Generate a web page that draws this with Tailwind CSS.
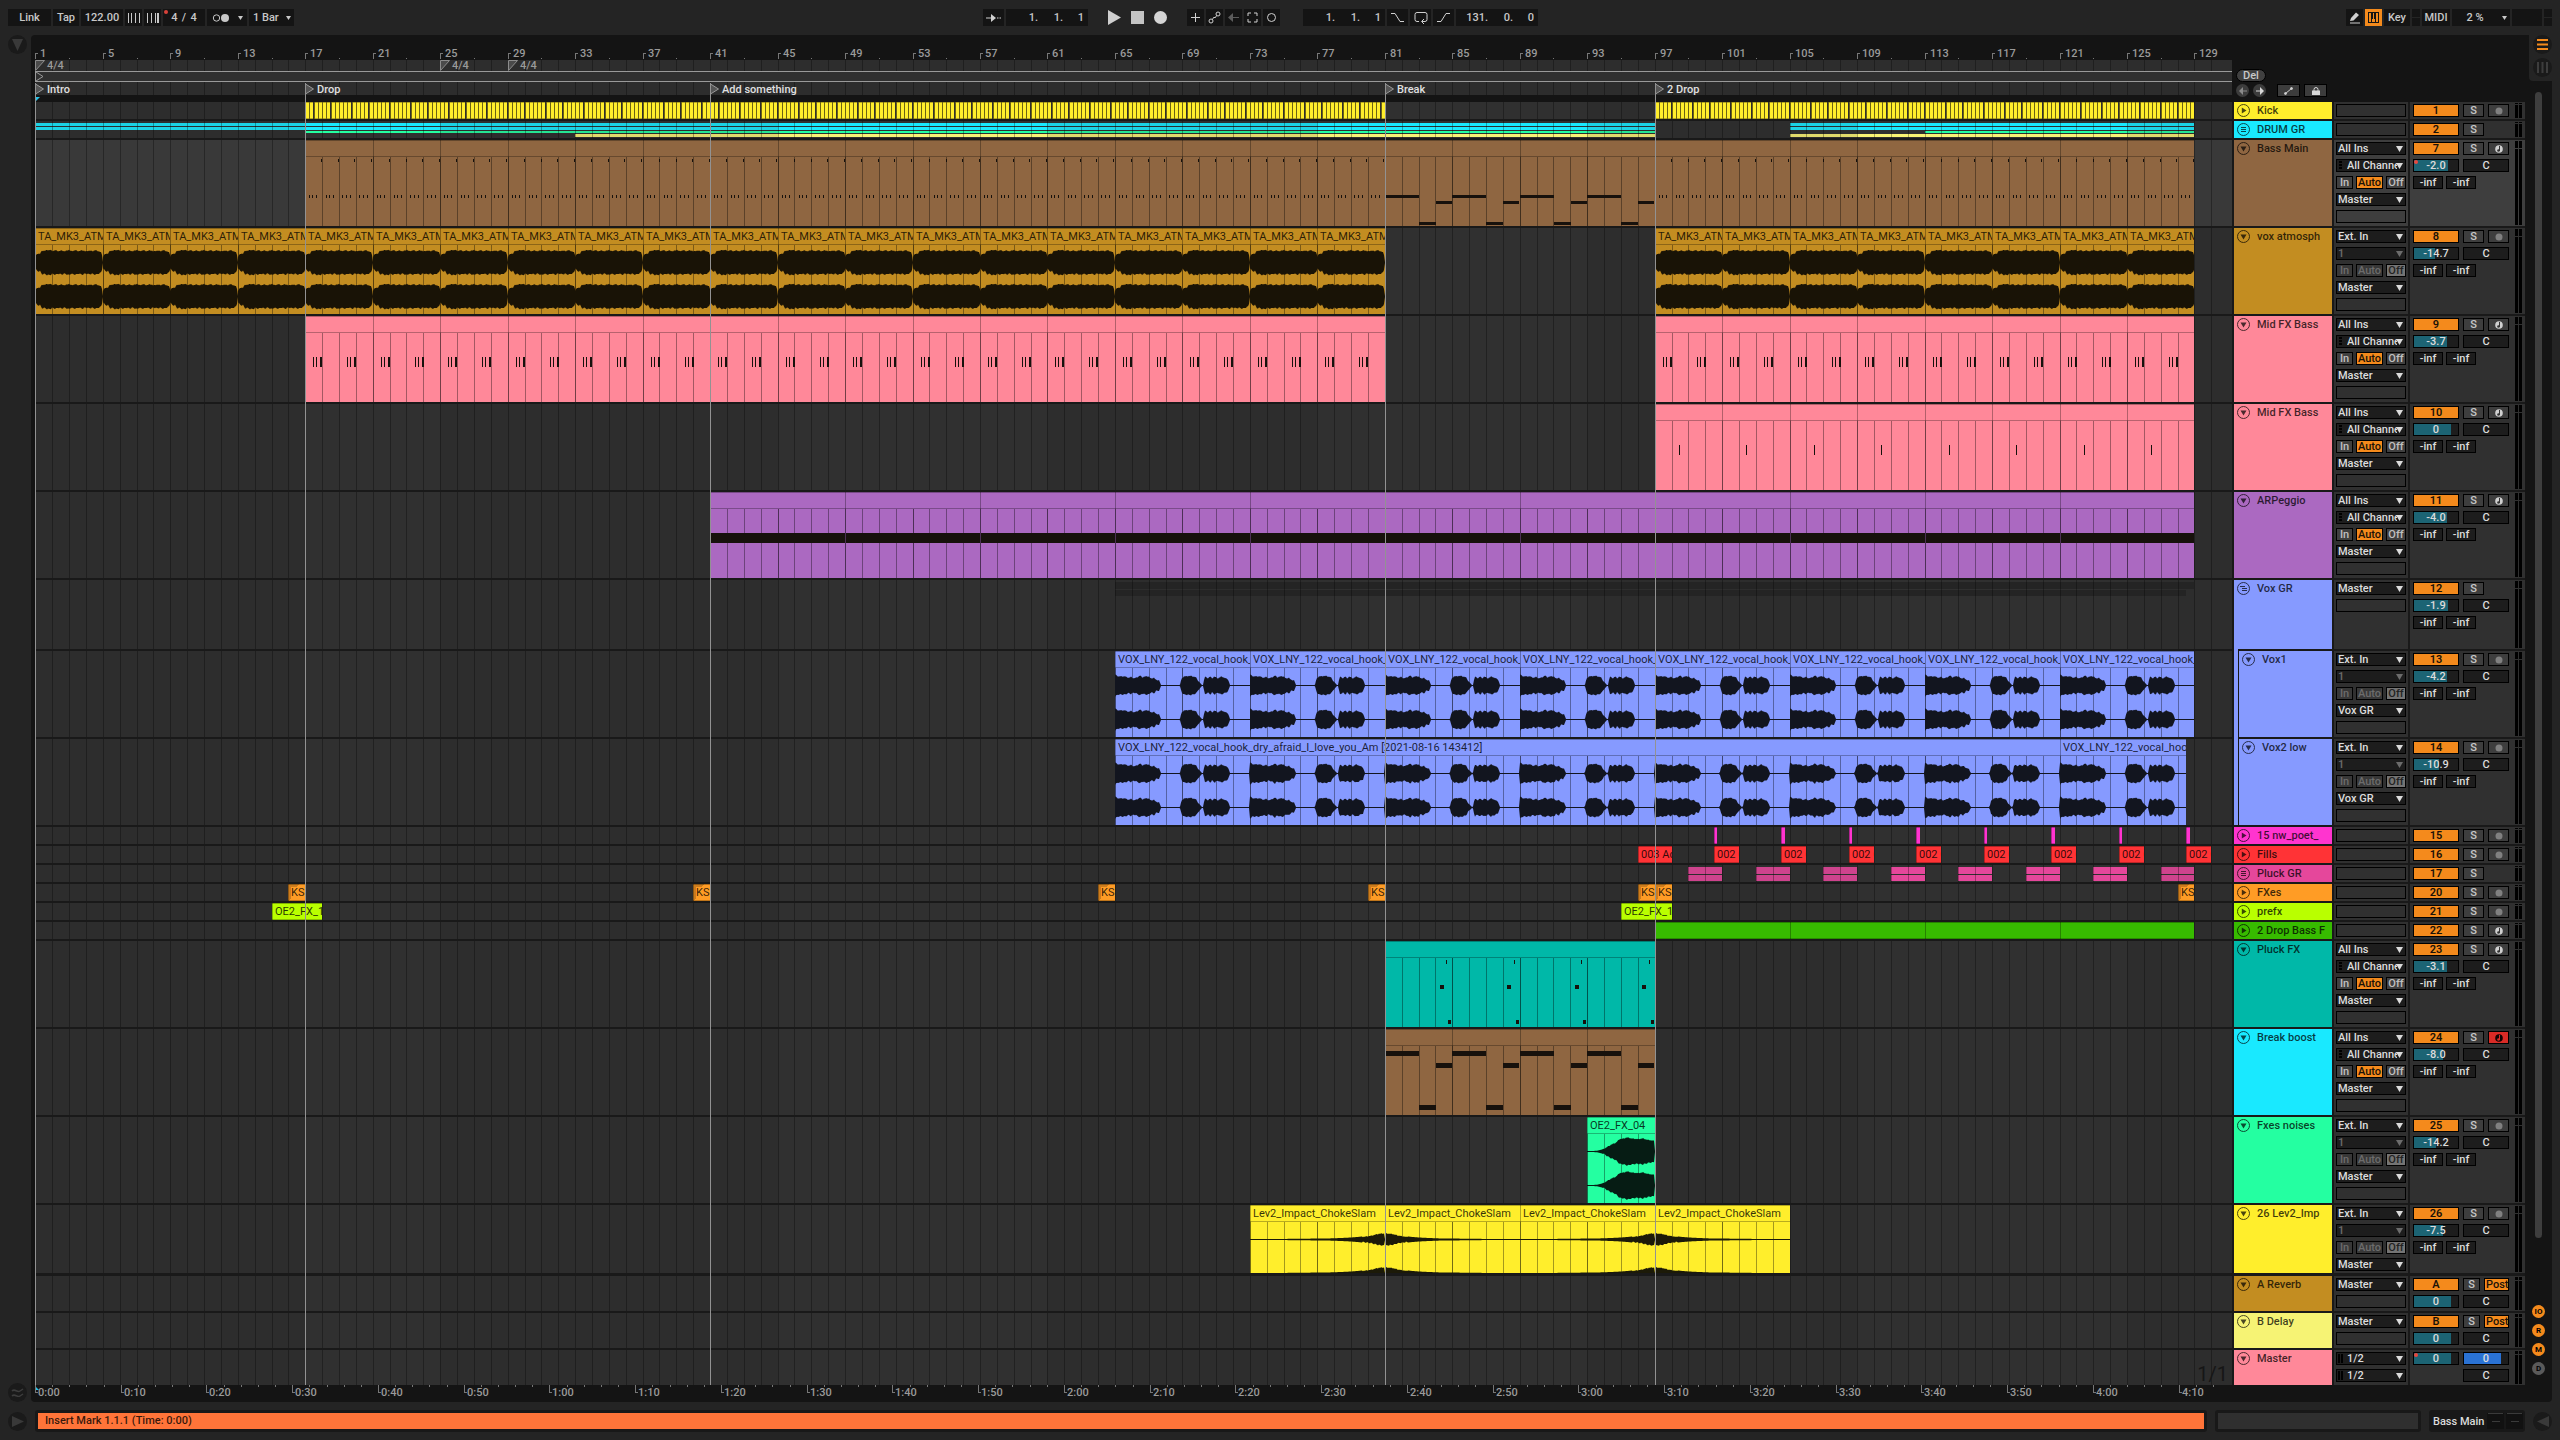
<!DOCTYPE html>
<html lang="en">
<head>
    <meta charset="UTF-8">
    <title>Arrangement</title>
    <script src="https://cdn.jsdelivr.net/npm/@tailwindcss/browser@4"></script>
</head>
<body class="bg-[#242424] font-['Roboto','Inter',sans-serif] text-[11px] leading-[13px] font-medium text-[#c8c8c8]">
<div class="flex min-h-screen flex-col">

    <!-- Control bar -->
    <header class="flex h-[35px] items-start px-2 pt-[9px]">
        <div class="flex w-[975px] gap-0.5">
            <button class="h-[17px] w-[43px] bg-[#141414]">Link</button>
            <button class="h-[17px] w-[26px] bg-[#141414]">Tap</button>
            <input aria-label="Tempo" value="122.00" class="h-[17px] w-[42px] bg-[#141414] text-center">
            <button aria-label="Nudge down" class="flex h-[17px] w-[17px] items-center justify-center bg-[#141414]">
                <svg width="12" height="10" shape-rendering="crispEdges" fill="#c8c8c8"><path d="M0 0h1v10h-1zM3 0h1v10h-1zM7 0h1v10h-1zM11 0h1v10h-1z"/></svg>
            </button>
            <button aria-label="Nudge up" class="flex h-[17px] w-[17px] items-center justify-center bg-[#141414]">
                <svg width="12" height="10" shape-rendering="crispEdges" fill="#c8c8c8"><path d="M0 0h1v10h-1zM4 0h1v10h-1zM8 0h1v10h-1zM10 0h2v10h-2z"/></svg>
            </button>
            <div class="relative flex h-[17px] w-[42px] items-center justify-center gap-[3px] bg-[#141414]">
                <span class="absolute top-px left-px size-1 rounded-full bg-[#d8423a]"></span>
                <input aria-label="Signature numerator" value="4" class="w-[9px] bg-transparent text-center">
                <span>/</span>
                <input aria-label="Signature denominator" value="4" class="w-[9px] bg-transparent text-center">
            </div>
            <button aria-label="Metronome" class="flex h-[17px] w-10 items-center gap-2 bg-[#141414] pl-[5px]">
                <svg width="18" height="10"><circle cx="4.500" cy="5" r="3.200" fill="none" stroke="#c8c8c8"/><circle cx="13" cy="5" r="4" fill="#c8c8c8"/></svg>
                <svg width="5" height="4" fill="#c8c8c8"><path d="M0 0h5l-2.500 4z"/></svg>
            </button>
            <div class="relative h-[17px] w-[45px] bg-[#141414]">
                <select aria-label="Quantization" class="h-[17px] w-full appearance-none bg-transparent pl-1"><option>1 Bar</option></select>
                <svg class="pointer-events-none absolute top-[7px] right-[3px]" width="5" height="4" fill="#c8c8c8"><path d="M0 0h5l-2.500 4z"/></svg>
            </div>
        </div>

        <div class="flex gap-0.5">
            <button aria-label="Follow" class="flex h-[17px] w-[21px] items-center justify-center bg-[#141414]">
                <svg width="15" height="10" fill="#d0d0d0"><path d="M0 4.500h5V1l5 4-5 4V5.500H0zM11 4.500h1.500v1H11zM13.500 4.500H15v1h-1.500z"/></svg>
            </button>
            <div class="flex h-[17px] w-[82px] items-center justify-end bg-[#141414] pr-1">
                <input aria-label="Position bar" value="1." class="w-[25px] bg-transparent text-right"><input aria-label="Position beat" value="1." class="w-[25px] bg-transparent text-right"><input aria-label="Position sixteenth" value="1" class="w-[21px] bg-transparent text-right">
            </div>
            <div class="mx-[18px] flex items-center gap-[10px]">
                <button aria-label="Play"><svg width="13" height="15" fill="#cfcfcf"><path d="M0 0l13 7.500L0 15z"/></svg></button>
                <button aria-label="Stop" class="size-[13px] bg-[#c4c4c4]"></button>
                <button aria-label="Record" class="size-[13px] rounded-full bg-[#d5d5d5]"></button>
            </div>
            <button aria-label="Overdub" class="flex h-[17px] w-[17px] items-center justify-center bg-[#141414]">
                <svg width="11" height="11" shape-rendering="crispEdges" fill="#d0d0d0"><path d="M5 1h1v9h-1zM1 5h9v1h-9z"/></svg>
            </button>
            <button aria-label="Automation arm" class="flex h-[17px] w-[17px] items-center justify-center bg-[#141414]">
                <svg width="13" height="13" fill="none" stroke="#d0d0d0"><circle cx="3" cy="10" r="2"/><circle cx="10" cy="3" r="2"/><path d="M4.500 8.500l1-2 2 0 1-2"/></svg>
            </button>
            <button aria-label="Re-enable automation" class="flex h-[17px] w-[17px] items-center justify-center bg-[#141414]">
                <svg width="11" height="9" fill="#5c5c5c"><path d="M0 4.500L5 0v4h6v1H5v4z"/></svg>
            </button>
            <button aria-label="Capture" class="flex h-[17px] w-[17px] items-center justify-center bg-[#141414]">
                <svg width="11" height="11" fill="none" stroke="#d0d0d0"><path d="M1 4V1h3M7 1h3v3M10 7v3H7M4 10H1V7"/></svg>
            </button>
            <button aria-label="Session record" class="mr-[21px] flex h-[17px] w-[17px] items-center justify-center bg-[#141414]">
                <svg width="11" height="11" fill="none" stroke="#d0d0d0"><circle cx="5.500" cy="5.500" r="4"/></svg>
            </button>
            <div class="flex h-[17px] w-[82px] items-center justify-end bg-[#141414] pr-1">
                <input aria-label="Loop start bar" value="1." class="w-[25px] bg-transparent text-right"><input aria-label="Loop start beat" value="1." class="w-[25px] bg-transparent text-right"><input aria-label="Loop start sixteenth" value="1" class="w-[21px] bg-transparent text-right">
            </div>
            <button aria-label="Punch in" class="flex h-[17px] w-[21px] items-center justify-center bg-[#141414]">
                <svg width="15" height="11" fill="none" stroke="#d0d0d0"><path d="M1 1.500h4l5 8h4"/></svg>
            </button>
            <button aria-label="Loop" class="flex h-[17px] w-[21px] items-center justify-center bg-[#141414]">
                <svg width="14" height="13" fill="none" stroke="#d0d0d0"><path d="M5 10.500H3a2 2 0 0 1-2-2v-5a2 2 0 0 1 2-2h8a2 2 0 0 1 2 2v5a2 2 0 0 1-2 2H8M10 8L7.500 10.500 10 13"/></svg>
            </button>
            <button aria-label="Punch out" class="flex h-[17px] w-[21px] items-center justify-center bg-[#141414]">
                <svg width="15" height="11" fill="none" stroke="#d0d0d0"><path d="M1 9.500h4l5-8h4"/></svg>
            </button>
            <div class="flex h-[17px] w-[82px] items-center justify-end bg-[#141414] pr-1">
                <input aria-label="Loop length bars" value="131." class="w-[30px] bg-transparent text-right"><input aria-label="Loop length beats" value="0." class="w-[25px] bg-transparent text-right"><input aria-label="Loop length sixteenths" value="0" class="w-[21px] bg-transparent text-right">
            </div>
        </div>

        <div class="ml-auto flex gap-0.5">
            <button aria-label="Draw mode" class="flex h-[17px] w-[17px] items-center justify-center bg-[#141414]">
                <svg width="12" height="12" fill="#d0d0d0"><path d="M1 9l1-3 5-5.500 3 2.500-5.500 5.500zM1 10.500h10v1H1z"/></svg>
            </button>
            <button aria-label="Computer MIDI keyboard" class="flex h-[17px] w-[17px] items-center justify-center bg-[#f48a1c]">
                <svg width="11" height="11" fill="none" stroke="#141414" shape-rendering="crispEdges"><path d="M.5.500h10v10H.500zM3.500 1v9M7.500 1v9"/><path stroke-width="2" d="M4 1v6M7 1v6"/></svg>
            </button>
            <button class="h-[17px] w-[26px] bg-[#141414]">Key</button>
            <div class="flex w-2 flex-col gap-px"><span class="h-2 bg-[#141414]"></span><span class="h-2 bg-[#141414]"></span></div>
            <button class="h-[17px] w-7 bg-[#141414]">MIDI</button>
            <button class="relative h-[17px] w-[58px] bg-[#141414] pr-3">2 %
                <svg class="absolute top-[7px] right-[3px]" width="5" height="4" fill="#c8c8c8"><path d="M0 0h5l-2.500 4z"/></svg>
            </button>
            <div class="h-[17px] w-[30px] bg-[#141414]"></div>
            <div class="flex w-2 flex-col gap-px"><span class="h-2 bg-[#141414]"></span><span class="h-2 bg-[#141414]"></span></div>
        </div>
    </header>

    <main class="flex pr-2">
        <div class="flex w-[31px] flex-col items-start justify-between pl-2">
            <button aria-label="Show browser" class="flex size-[19px] items-center justify-center rounded-full bg-[#1a1a1a]">
                <svg width="11" height="12" fill="#393939"><path d="M0 0h11L5.500 12z"/></svg>
            </button>
            <button aria-label="Groove pool" class="flex size-[19px] items-center justify-center rounded-full bg-[#1a1a1a]">
                <svg width="13" height="9" fill="none" stroke="#3d3d3d" stroke-width="1.500"><path d="M1 3c3-3 5 2 8 0l3-2M1 8c3-3 5 2 8 0l3-2"/></svg>
            </button>
        </div>

        <section class="min-w-0 flex-1 rounded-l-[4px] bg-[#141414] px-1">
            <!-- Rulers -->
            <div class="flex h-[67px] gap-0.5">
                <div id="rulers" class="relative min-w-0 flex-1 overflow-hidden">
                    <div id="beatRuler" class="relative h-[25px] text-[#9a9a9a]"></div>
                    <div id="signatureLane" class="relative h-[11px] bg-[#2d2d2d] text-[#9a9a9a]"></div>
                    <div class="h-[11px] border border-r-0 border-[#9a9a9a] bg-[#303030]">
                        <svg width="9" height="9" fill="none" stroke="#9a9a9a"><path d="M0 0l7 4.500L0 9"/></svg>
                    </div>
                    <div id="locatorLane" class="relative h-[13px] bg-[#2d2d2d] text-[#e0e0e0]"></div>
                    <svg width="6" height="7" class="block" fill="#27c3e8"><path d="M1 2h4L1 6z"/></svg>
                </div>
                <div class="flex w-[291px] flex-col gap-0.5 pt-[34px] pl-0.5">
                    <button class="h-[13px] w-[30px] rounded-full border border-black bg-[#404040] leading-[11px]">Del</button>
                    <div class="flex">
                        <button aria-label="Previous locator" class="flex size-[13px] items-center justify-center rounded-full bg-[#3c3c3c]">
                            <svg width="8" height="8" fill="#8a8a8a"><path d="M0 4l4-4v3.500h4v1H4V8z"/></svg>
                        </button>
                        <button aria-label="Next locator" class="ml-1 flex size-[13px] items-center justify-center rounded-full bg-[#3c3c3c]">
                            <svg width="8" height="8" fill="#d8d8d8"><path d="M8 4L4 0v3.500H0v1h4V8z"/></svg>
                        </button>
                        <button aria-label="Automation mode" class="ml-[11px] flex h-[13px] w-[23px] items-center justify-center border border-black bg-[#3c3c3c]">
                            <svg width="9" height="8" fill="#cfcfcf" stroke="#cfcfcf"><path d="M1.500 6.500l6-5"/><circle cx="1.500" cy="6.500" r="1"/><circle cx="7.500" cy="1.500" r="1"/></svg>
                        </button>
                        <button aria-label="Lock envelopes" class="ml-1 flex h-[13px] w-[23px] items-center justify-center border border-black bg-[#3c3c3c]">
                            <svg width="8" height="8" fill="#d8d8d8"><path d="M0 3.500h8V8H0z"/><path fill="none" stroke="#d8d8d8" d="M2 4V2.500a2 2 0 0 1 4 0V4"/></svg>
                        </button>
                    </div>
                </div>
            </div>

            <!-- Track rows -->
            <div class="relative">
                <div id="tracks" class="flex flex-col gap-0.5 bg-[#191919]"></div>
                <div id="locatorLines" class="pointer-events-none absolute inset-y-0 left-0"></div>
            </div>

            <div class="flex h-[17px] gap-0.5">
                <div id="timeRuler" class="relative min-w-0 flex-1 overflow-hidden text-[#9a9a9a]"></div>
                <div class="w-[291px]"></div>
            </div>
        </section>

        <aside class="flex w-[23px] flex-col rounded-br-[4px] bg-[#141414]">
            <div class="flex h-[46px] flex-col items-end gap-1 rounded-bl-[4px] bg-[#242424]">
                <button aria-label="Arrangement view" class="flex size-[19px] items-center justify-center rounded-full bg-[#1a1a1a]">
                    <svg width="11" height="11" fill="#f48a1c"><path d="M0 0h11v2H0zM0 4.500h11v2H0zM0 9h11v2H0z"/></svg>
                </button>
                <button aria-label="Session view" class="flex size-[19px] items-center justify-center rounded-full bg-[#1a1a1a]">
                    <svg width="11" height="11" fill="#3d3d3d"><path d="M0 0h2v11H0zM4.500 0h2v11h-2zM9 0h2v11H9z"/></svg>
                </button>
            </div>
            <div class="mt-[11px] ml-1.5 h-[1146px] w-[7px] rounded-full bg-[#3e3e3e]"></div>
            <div class="mt-[67px] ml-[3px] flex flex-col gap-1.5 text-[8px] leading-[13px] font-bold text-black">
                <button class="size-[13px] rounded-full bg-[#f48a1c]">IO</button>
                <button class="size-[13px] rounded-full bg-[#f48a1c]">R</button>
                <button class="size-[13px] rounded-full bg-[#f48a1c]">M</button>
                <button class="size-[13px] rounded-full bg-[#5a5a5a]">D</button>
            </div>
        </aside>
    </main>

    <!-- Status bar -->
    <footer class="flex items-center gap-2 px-2 pt-2">
        <button aria-label="Show clip view" class="flex size-[19px] items-center justify-center rounded-full bg-[#1a1a1a]">
            <svg width="12" height="11" fill="#393939"><path d="M0 0l12 5.500L0 11z"/></svg>
        </button>
        <div class="flex-1 rounded-[3px] bg-[#181818] p-[3px]">
            <p class="h-4 bg-[#ff7439] px-[7px] leading-4 text-black/80">Insert Mark 1.1.1 (Time: 0:00)</p>
        </div>
        <div class="w-[206px] rounded-[3px] bg-[#181818] p-[3px]"><div class="h-4 bg-[#2f2f2f]"></div></div>
        <div class="flex h-[22px] w-24 items-center justify-between rounded-[3px] bg-[#181818] pl-1 whitespace-nowrap text-[#dcdcdc]">
            <span>Bass Main</span>
            <svg width="38" height="16" shape-rendering="crispEdges"><path fill="#111" d="M0 0h17v16H0zM19 0h17v16H19z"/><path fill="#3a3a3a" d="M1 0h15v1H1zM20 0h15v1H20zM5 8h8v1H5zM24 8h8v1h-8z"/></svg>
        </div>
        <button aria-label="Show device view" class="flex size-[19px] items-center justify-center rounded-full bg-[#1a1a1a]">
            <svg width="12" height="11" fill="#393939"><path d="M12 0L0 5.500 12 11z"/></svg>
        </button>
    </footer>
</div>

<script>
    const TOTAL_BARS = 130.25;
    const BRIGHT = [[17, 25], [45, 61], [77, 93], [109, 125]];
    const LOCATORS = [[1, 'Intro'], [17, 'Drop'], [41, 'Add something'], [81, 'Break'], [97, '2 Drop']];

    const every = (from, to, step, extra) => {
        const out = [];
        for (let b = from; b < to; b += step) out.push({ s: b, e: b + step, ...extra });
        return out;
    };
    const starts = (from, n, step, len, extra) =>
        Array.from({ length: n }, (_, i) => ({ s: from + i * step, e: from + i * step + len, ...extra }));

    // notes: [bar offset, top, width in px or bars ('b'), height]
    const BASS = [0, 1, 2, 3].flatMap(b => [[b + .93, 19, 1, 3], [b + .22, 55, 1, 3], [b + .42, 55, 1, 3], [b + .66, 55, 1, 3]]);
    const BREAK_BASS = [[0, 55, '2b', 3], [2, 82, '1b', 3], [3, 61, '1b', 3]];
    const BOOST = [[0, 22, '2b', 5], [2, 76, '1b', 5], [3, 34, '1b', 5]];
    const MID = [0, 2].flatMap(b => [[b + .5, 41, 1, 10], [b + .66, 41, 1, 10], [b + .9, 41, 2, 10]]);
    const PLUCK = [0, 4, 8, 12].flatMap(b => [[b + 3.64, 19, 1, 4], [b + 3.24, 44, 4, 4], [b + 3.76, 79, 3, 4]]);

    // envelopes: [bar offset, amplitude in px]
    const VOX_ENV = [[0, 11.5], [.18, 9.5], [.6, 9.5], [.8, 8], [.95, 9], [1.1, 7.5], [1.3, 8.5], [1.5, 10.5], [1.6, 8.5], [1.8, 9.5], [2, 9.5], [2.15, 7], [2.3, 8.5], [2.45, 5.5], [2.6, 6], [2.72, .5],
        [3.85, .5], [3.95, 7.5], [4.1, 9.5], [4.5, 10], [4.8, 8.5], [4.95, 4.5], [5.15, .5], [5.22, .5], [5.32, 9.5], [5.5, 7.5], [5.65, 9.5], [5.75, 7.5], [5.9, 9.5], [6.1, 7.5], [6.3, 9.5], [6.5, 8], [6.7, 6.5], [6.82, .5], [8, .5]];
    const ATM_ENV = [[0, 6], [.15, 9.5], [.3, 9], [.4, 12.2], [.6, 12], [.7, 13], [.95, 12.7], [1.02, 11.7], [1.2, 12.7], [1.4, 11.7], [1.6, 12.5], [1.75, 11.5], [2, 13], [2.15, 11.7], [2.4, 12.6], [2.6, 11.6], [2.8, 12.7], [3, 11.5], [3.2, 12.3], [3.4, 11.7], [3.6, 12.7], [3.8, 11.5], [3.95, 10], [4, 5]];
    const NOISE_ENV = [[0, .5], [.6, .7], [.9, 2], [1.1, 4], [1.4, 7], [1.7, 9], [1.95, 13], [2.1, 13], [2.4, 14.5], [2.6, 13.5], [3, 12.7], [3.3, 13.5], [3.6, 12], [4, 11]];
    const HIT = [[0, .5], [3, .7], [5, 1.2], [6, 2], [6.8, 3.2], [7.2, 4.2], [7.6, 6], [8, 6.5]];
    const TAIL = HIT.map(([b, a]) => [8 - b, a]).reverse();

    const VOX = 'VOX_LNY_122_vocal_hook_';
    const TRACKS = [
        { name: 'Kick', no: 1, kind: 'mini', color: '#ffee2c', arm: 'audio', kick: [[17, 81], [97, 129]] },
        { name: 'DRUM GR', no: 2, kind: 'mini', color: '#19e9ff', group: 'flat',
            strips: [['#19e9ff', 2, 3, [[1, 97], [105, 129]]], ['#19e9ff', 6, 3, [[1, 97], [105, 129]]], ['#24ffa1', 10, 2, [[17, 97], [113, 129]]], ['#f9f374', 13, 3, [[33, 97], [105, 129]]]] },
        { name: 'Bass Main', no: 7, kind: 'full', color: '#8f6641', arm: 'midi', vol: '-2.0', fill: 78, automated: true, selected: true,
            clips: [...every(17, 81, 4, { notes: BASS }), ...every(81, 97, 4, { notes: BREAK_BASS }), ...every(97, 129, 4, { notes: BASS })] },
        { name: 'vox atmosph', no: 8, kind: 'full', color: '#c38d21', arm: 'audio', vol: '-14.7', fill: 47,
            clips: [...every(1, 81, 4, { title: 'TA_MK3_ATM', env: ATM_ENV, ink: '#191306' }), ...every(97, 129, 4, { title: 'TA_MK3_ATM', env: ATM_ENV, ink: '#191306' })] },
        { name: 'Mid FX Bass', no: 9, kind: 'full', color: '#ff8899', arm: 'midi', vol: '-3.7', fill: 74,
            clips: [...every(17, 81, 4, { notes: MID }), ...every(97, 129, 4, { notes: MID })] },
        { name: 'Mid FX Bass', no: 10, kind: 'full', color: '#ff8899', arm: 'midi', vol: '0', fill: 83,
            clips: every(97, 129, 4, { notes: [[1.42, 41, 1, 10]] }) },
        { name: 'ARPeggio', no: 11, kind: 'full', color: '#ab69c1', arm: 'midi', vol: '-4.0', fill: 74,
            clips: every(41, 129, 8, { notes: [[.06, 41, '8b', 10]] }) },
        { name: 'Vox GR', no: 12, kind: 'group', color: '#869aff', group: 'tree', vol: '-1.9', fill: 78, out: 'Master',
            strips: [['#242424', 2, 7, [[65, 129]]], ['#242424', 10, 6, [[65, 128.5]]]] },
        { name: 'Vox1', no: 13, kind: 'full', color: '#869aff', arm: 'audio', vol: '-4.2', fill: 74, out: 'Vox GR', child: true,
            clips: every(65, 129, 8, { title: VOX, env: VOX_ENV, ink: '#12151f' }) },
        { name: 'Vox2 low', no: 14, kind: 'full', color: '#869aff', arm: 'audio', vol: '-10.9', fill: 56, out: 'Vox GR', child: true,
            clips: [{ s: 65, e: 121, title: VOX + 'dry_afraid_I_love_you_Am [2021-08-16 143412]', env: VOX_ENV, loop: 8, ink: '#12151f' }, { s: 121, e: 128.5, title: VOX, env: VOX_ENV, ink: '#12151f' }] },
        { name: '15 nw_poet_', no: 15, kind: 'mini', color: '#ff34cf', arm: 'audio', clips: starts(100.5, 8, 4, .22) },
        { name: 'Fills', no: 16, kind: 'mini', color: '#ff3336', arm: 'audio', clips: [{ s: 96, e: 98, title: '003 Ac' }, ...starts(100.5, 8, 4, 1.5, { title: '002 C' })] },
        { name: 'Pluck GR', no: 17, kind: 'mini', color: '#e5479b', group: 'flat',
            strips: [2, 10].map((y, i) => ['#e5479b', y, i ? 6 : 7, starts(99, 8, 4, 2).map(c => [c.s, c.e])]) },
        { name: 'FXes', no: 20, kind: 'mini', color: '#ff9c25', arm: 'audio', clips: [16, 40, 64, 80, 96, 97, 128].map(s => ({ s, e: s + 1, title: 'KSI', fade: true })) },
        { name: 'prefx', no: 21, kind: 'mini', color: '#b9ff00', arm: 'audio', clips: [15, 95].map(s => ({ s, e: s + 3, title: 'OE2_FX_1' })) },
        { name: '2 Drop Bass F', no: 22, kind: 'mini', color: '#37bb00', arm: 'midi', clips: every(97, 129, 8) },
        { name: 'Pluck FX', no: 23, kind: 'full', color: '#00b8a8', arm: 'midi', vol: '-3.1', fill: 76, clips: [{ s: 81, e: 97, notes: PLUCK }] },
        { name: 'Break boost', no: 24, kind: 'full', color: '#19e9ff', arm: 'armed', vol: '-8.0', fill: 65, clips: every(81, 97, 4, { notes: BOOST, color: '#8f6641' }) },
        { name: 'Fxes noises', no: 25, kind: 'full', color: '#24ffa1', arm: 'audio', vol: '-14.2', fill: 49, clips: [{ s: 93, e: 97, title: 'OE2_FX_04', env: NOISE_ENV, ink: '#061c14' }] },
        { name: '26 Lev2_Imp', no: 26, kind: 'short', color: '#ffee2c', arm: 'audio', vol: '-7.5', fill: 65,
            clips: [73, 81, 89, 97].map((s, i) => ({ s, e: s + 8, title: 'Lev2_Impact_ChokeSlam', env: i % 2 ? TAIL : HIT, ink: '#1c1a08' })) },
        { name: 'A Reverb', no: 'A', kind: 'return', color: '#c38d21', vol: '0', fill: 83, first: true },
        { name: 'B Delay', no: 'B', kind: 'return', color: '#f6f374', vol: '0', fill: 83 },
        { name: 'Master', kind: 'master', color: '#ff8899', vol: '0', fill: 83 },
    ];

    const HEIGHT = { mini: 'h-[17px]', full: 'h-[86px]', group: 'h-[69px]', short: 'h-[68px]', return: 'h-[35px]', master: 'h-[35px]' };
    const LANE_PX = { mini: 17, full: 86, group: 69, short: 68, return: 35, master: 35 };

    const CARET = '<svg class="pointer-events-none absolute top-[3px] right-0.5" width="7" height="6" fill="currentColor"><path d="M0 0h7L3.500 6z"/></svg>';

    function select(label, value, opts = {}) {
        const tone = opts.off ? 'text-[#6c6c6c]' : 'text-[#dcdcdc]';
        const pad = opts.icon ? 'pl-2.5' : 'pl-px';
        const icon = opts.icon === 'meter'
            ? '<svg class="absolute top-px left-px" width="5" height="9" fill="#000"><path d="M0 0h2v9H0zM3 0h2v9H3z"/></svg>'
            : opts.icon ? '<svg class="absolute top-px left-0.5" width="3" height="9" fill="#000"><path d="M0 0h3v2H0zM0 3h3v2H0zM0 6h3v2H0z"/></svg>' : '';
        return `<div class="relative h-[13px] w-[70px] border border-black bg-[#1d1d1d] ${tone}">${icon}
            <select aria-label="${label}" class="block h-[11px] w-full appearance-none overflow-hidden bg-transparent ${pad} pr-2 leading-[11px]"><option>${value}</option></select>${CARET}</div>`;
    }
    const BLANK = '<div class="h-[13px] w-[70px] border border-black"></div>';

    function monitor(audio) {
        const cls = audio
            ? ['bg-[#383838] text-[#6c6c6c]', 'bg-[#383838] text-[#6c6c6c]', 'bg-[#747474] text-[#222]']
            : ['bg-[#404040] text-[#c0c0c0]', 'bg-[#f48a1c] text-[#1a1208]', 'bg-[#404040] text-[#c0c0c0]'];
        return `<div class="flex w-[70px] justify-between">
            <button class="h-[13px] w-[17px] border border-black leading-[11px] ${cls[0]}">In</button>
            <button class="flex h-[13px] w-[27px] justify-center border border-black leading-[11px] ${cls[1]}">Auto</button>
            <button class="flex h-[13px] w-5 justify-center border border-black leading-[11px] ${cls[2]}">Off</button></div>`;
    }

    function routing(t) {
        if (t.kind === 'mini') return BLANK;
        if (t.kind === 'group' || t.kind === 'return') return select(t.name + ' output', 'Master') + BLANK;
        if (t.kind === 'master') return select('Cue out', '1/2', { icon: 'meter' }) + select('Master out', '1/2', { icon: 'meter' });
        const audio = t.arm === 'audio';
        return (audio
            ? select(t.name + ' input', 'Ext. In') + select(t.name + ' input channel', '1', { off: true })
            : select(t.name + ' input', 'All Ins') + select(t.name + ' input channel', 'All Channels', { icon: 'midi' }))
            + monitor(audio) + select(t.name + ' output', t.out || 'Master') + (t.kind === 'short' ? '' : BLANK);
    }

    const NOTE = '<path d="M4 1h1v5H4z"/><circle cx="3.500" cy="5.500" r="1.300"/>';
    function arm(kind) {
        if (!kind) return '';
        const icon = {
            audio: '<svg width="8" height="8"><circle cx="4" cy="4" r="3.500" fill="#808080"/></svg>',
            midi: `<svg width="8" height="8"><circle cx="4" cy="4" r="3.800" fill="#d0d0d0"/><g fill="#333">${NOTE}</g></svg>`,
            armed: `<svg width="8" height="8"><circle cx="4" cy="4" r="3.800" fill="#120404"/><g fill="#d92b26">${NOTE}</g></svg>`,
        }[kind];
        const bg = kind === 'armed' ? 'bg-[#d92b26]' : 'bg-[#3e3e3e]';
        return `<button aria-label="Arm" class="ml-1 flex h-[13px] w-[21px] items-center justify-center border border-black ${bg}">${icon}</button>`;
    }

    const field = (label, value, width) =>
        `<input aria-label="${label}" value="${value}" class="h-[13px] ${width} border border-black bg-[#1d1d1d] text-center leading-[11px] text-[#dcdcdc]">`;
    const slider = (t, label, color) => `<div class="relative h-[13px] w-[46px] border border-black bg-[#1d1d1d]">
        <div class="absolute inset-y-0 left-0 ${color}" style="width:${t.fill}%"></div>
        ${t.automated || t.kind === 'master' && label === 'Volume' ? '<span class="absolute top-0 left-0 size-1 rounded-full bg-[#e8483e]"></span>' : ''}
        <input aria-label="${label}" value="${t.vol}" class="relative block h-[11px] w-full bg-transparent text-center leading-[11px] text-[#dcdcdc]"></div>`;

    function mixer(t) {
        const ret = t.kind === 'return';
        const pan = field('Pan', 'C', 'w-[46px]');
        if (t.kind === 'master') {
            return `<div class="flex gap-1">${slider(t, 'Volume', 'bg-[#1c6474]')}${slider(t, 'Cue volume', 'bg-[#2a72d4]')}</div>
                <div class="flex pl-[50px]">${pan}</div>`;
        }
        let html = `<div class="flex">
            <button class="h-[13px] w-[46px] border border-black bg-[#f48a1c] leading-[11px] font-semibold text-[#1a1208]">${t.no}</button>
            <button class="ml-1 h-[13px] ${ret ? 'w-[17px]' : 'w-[21px]'} border border-black bg-[#3e3e3e] leading-[11px]">S</button>
            ${ret ? '<button class="ml-1 h-[13px] w-[25px] border border-black bg-[#f48a1c] pl-px text-left leading-[11px] text-[#1a1208]">Post</button>' : arm(t.arm)}</div>`;
        if (t.kind !== 'mini') html += `<div class="flex gap-1">${slider(t, 'Volume', 'bg-[#1c6474]')}${pan}</div>`;
        if (t.kind !== 'mini' && !ret) html += `<div class="flex gap-[3px]">${field('Peak', '-inf', 'w-[30px]')}${field('Send', '-inf', 'w-[30px]')}</div>`;
        return html;
    }

    function badge(t) {
        let mark = '<path d="M3.500 4.500h6L6.500 9.500z" fill="#000" stroke="none"/>';
        if (t.kind === 'mini') mark = '<path d="M4.800 3.500v6L9.500 6.500z" fill="#000" stroke="none"/>';
        if (t.group === 'flat') mark = '<path d="M4 4.500h5M4 6.500h5M4 8.500h5"/>';
        if (t.group === 'tree') mark = '<path d="M3 4.500h5M5 6.500h5M5 8.500h5"/>';
        return `<svg class="shrink-0 opacity-70" width="13" height="13" fill="none" stroke="#000"><circle cx="6.500" cy="6.500" r="6"/>${mark}</svg>`;
    }

    function meter(t) {
        const top = t.kind === 'mini' ? 'h-px' : LANE_PX[t.kind] === 35 ? 'h-[3px]' : 'h-[7px]';
        const col = `<div class="flex w-[3px] flex-col gap-px"><span class="${top} bg-black"></span><span class="flex-1 bg-black"></span></div>`;
        return `<div class="ml-auto flex gap-px py-px">${col}${col}</div>`;
    }

    function row(t, i) {
        const bg = t.selected ? 'bg-[#3e3e3e]' : 'bg-[#303030]';
        return `<div class="flex gap-0.5 ${HEIGHT[t.kind]} ${t.first ? 'mt-px' : ''}">
            <div class="relative min-w-0 flex-1 overflow-hidden ${t.selected ? 'bg-[#393939]' : 'bg-[#2d2d2d]'}" data-lane="${i}"></div>
            <div class="relative w-[98px] ${t.child ? 'pl-[5px]' : ''}">
                ${t.child ? `<span class="absolute -top-0.5 bottom-0 left-0 w-1" style="background:${t.color}"></span>` : ''}
                <div class="flex h-full gap-[7px] overflow-hidden pt-0.5 pl-[3px] whitespace-nowrap" style="background:${t.color}">${badge(t)}<span class="text-black/75">${t.name}</span></div>
            </div>
            <div class="flex w-[74px] flex-col gap-1 overflow-hidden pt-0.5 pl-0.5 ${bg}">${routing(t)}</div>
            <div class="flex w-[115px] pr-[3px] pl-[3px] ${bg}"><div class="flex flex-col gap-1 pt-0.5">${mixer(t)}</div>${meter(t)}</div>
        </div>`;
    }

    document.getElementById('tracks').innerHTML = TRACKS.map(row).join('');

    let ppb;
    const X = bar => Math.round((bar - 1) * ppb + .4);
    const rect = (x, y, w, h, fill, op = 1) => `<rect x="${x}" y="${y}" width="${w}" height="${h}" fill="${fill}" fill-opacity="${op}"/>`;

    function grid(from, to, y, h, op, strong) {
        let out = '';
        const x0 = X(from);
        for (let b = Math.ceil(from); b <= to; b++) out += rect(X(b) - x0, y, 1, h, '#000', strong && b % 4 === 1 ? strong : op);
        return out;
    }

    function wave(c, mid) {
        const w = X(c.e) - X(c.s), len = c.loop || 400;
        const amp = bar => {
            const p = bar % len;
            for (let i = 1; i < c.env.length; i++) {
                const [b1, a1] = c.env[i - 1], [b2, a2] = c.env[i];
                if (p <= b2) return a1 + (a2 - a1) * (p - b1) / (b2 - b1);
            }
            return .5;
        };
        const up = [], down = [];
        for (let x = 0; x <= w; x++) {
            const a = amp(x / ppb);
            up.push(`${x} ${(mid - a + (a > 3 ? ((x * 7 + 3) % 5) / 5 : 0)).toFixed(1)}`);
            down.unshift(`${x} ${(mid + a - (a > 3 ? ((x * 3) % 4) / 3 : 0)).toFixed(1)}`);
        }
        return `<path d="M${up.join('L')}L${down.join('L')}z" fill="${c.ink}"/>`;
    }

    function clip(t, c) {
        const x = X(c.s), w = Math.max(2, X(c.e) - x), h = LANE_PX[t.kind];
        const mini = t.kind === 'mini';
        let g = rect(0, 0, w, 1, '#000', .3) + rect(0, 0, 1, mini ? h : 17, '#000', .3);
        if (mini) {
            g += rect(0, h - 1, w, 1, '#000', .25);
            if (c.fade) g += '<path d="M0 0h11L8 3H3v11l-3 3z" fill="#000" fill-opacity=".2"/>';
        } else {
            g += rect(0, 16, w, 1, '#000', .28) + grid(c.s, c.e, 17, h - 17, .36, .55);
            (c.notes || []).forEach(([b, y, nw, nh]) => {
                const nx = Math.round(b * ppb);
                const px = typeof nw === 'string' ? Math.round((b + parseInt(nw)) * ppb) - nx : nw;
                g += rect(nx, y, px, nh, '#17110c');
            });
            if (c.env) g += wave(c, 34.5) + wave(c, 68.5);
        }
        const title = c.title ? `<span class="relative block pt-px pl-[3px] leading-[16px] font-normal text-black/80">${c.title}</span>` : '';
        return `<div class="absolute inset-y-0 overflow-hidden whitespace-nowrap" style="left:${x}px;width:${w}px;background:${c.color || t.color}">
            <svg class="absolute inset-0" width="${w}" height="${h}" ${c.env ? '' : 'shape-rendering="crispEdges"'}>${g}</svg>${title}</div>`;
    }

    function drawLane(t, el, width) {
        const h = LANE_PX[t.kind];
        let g = BRIGHT.map(([a, b]) => rect(X(a), 0, X(b) - X(a), h, '#fff', .015)).join('') + grid(1, TOTAL_BARS, 0, h, .3);
        (t.strips || []).forEach(([color, y, sh, spans]) => spans.forEach(([a, b]) => {
            g += rect(X(a), y, X(b) - X(a), sh, color, color === '#242424' ? 1 : .88);
            BRIGHT.forEach(([p, q]) => {
                const s = Math.max(a, p), e = Math.min(b, q);
                if (s < e) g += rect(X(s), y, X(e) - X(s), sh, color);
            });
            for (let n = Math.ceil(a); n < b; n++) g += rect(X(n), y, 1, sh, '#000', .3);
        }));
        (t.kick || []).forEach(([a, b]) => {
            for (let n = a; n < b; n += .25) g += rect(X(n), 0, 4, h, '#6b6214') + rect(X(n) + 1, 0, 3, h, '#b5a81e') + rect(X(n) + 1, 1, 3, h - 2, '#ffee2c');
        });
        el.innerHTML = `<svg class="absolute inset-0" width="${width}" height="${h}" shape-rendering="crispEdges">${g}</svg>` + (t.clips || []).map(c => clip(t, c)).join('')
            + (t.kind === 'master' ? '<span class="absolute right-1 bottom-0 text-[20px] leading-[22px] font-normal text-[#161616]">1/1</span>' : '');
    }

    function draw() {
        const width = document.getElementById('rulers').clientWidth;
        ppb = width / TOTAL_BARS;

        let ticks = '', labels = '';
        for (let b = 1; b <= 130; b += 2) {
            if (b % 4 === 1) {
                ticks += rect(X(b), 18, 1, 6, '#777') + rect(X(b), 18, 3, 1, '#777');
                labels += `<span class="absolute top-3" style="left:${X(b) + 5}px">${b}</span>`;
            } else ticks += rect(X(b), 23, 1, 1, '#777');
        }
        const svg = (h, g) => `<svg class="absolute inset-0" width="${width}" height="${h}">${g}</svg>`;
        document.getElementById('beatRuler').innerHTML = svg(25, ticks) + labels;

        document.getElementById('signatureLane').innerHTML = svg(11, grid(1, TOTAL_BARS, 0, 11, .3)
            + [1, 25, 29].map(b => `<path d="M${X(b) + .5} .5h9l-9 10z" fill="#4a4a4a" stroke="#8c8c8c"/>`).join(''))
            + [1, 25, 29].map(b => `<span class="absolute top-0 leading-[11px]" style="left:${X(b) + 12}px">4/4</span>`).join('');

        document.getElementById('locatorLane').innerHTML = svg(13, grid(1, TOTAL_BARS, 0, 13, .3)
            + LOCATORS.map(([b]) => `<path d="M${X(b) + .5} 2l8 5-8 5z" fill="#555" stroke="#999"/>`).join(''))
            + LOCATORS.map(([b, name]) => `<span class="absolute top-px" style="left:${X(b) + 12}px">${name}</span>`).join('');

        document.getElementById('locatorLines').innerHTML = LOCATORS.map(([b]) =>
            `<span class="absolute -top-[19px] bottom-0 w-px bg-[#929292]" style="left:${X(b)}px"></span>`).join('');

        let time = '<path d="M0 1l4 4H0z" fill="#27c3e8"/>', stamps = '';
        for (let s = 0; s <= 254; s += 2) {
            const x = Math.round(s * 122 / 240 * ppb);
            if (s % 10 === 0) {
                time += rect(x, 0, 1, 8, '#777') + rect(x, 7, 3, 1, '#777');
                stamps += `<span class="absolute top-px" style="left:${x + 3}px">${Math.floor(s / 60)}:${String(s % 60).padStart(2, '0')}</span>`;
            } else time += rect(x, 0, 1, 2, '#777');
        }
        document.getElementById('timeRuler').innerHTML = svg(17, time) + stamps;

        document.querySelectorAll('[data-lane]').forEach(el => drawLane(TRACKS[el.dataset.lane], el, width));
    }
    // also fires once the stylesheet has settled the layout
    new ResizeObserver(draw).observe(document.getElementById('rulers'));
</script>
</body>
</html>
